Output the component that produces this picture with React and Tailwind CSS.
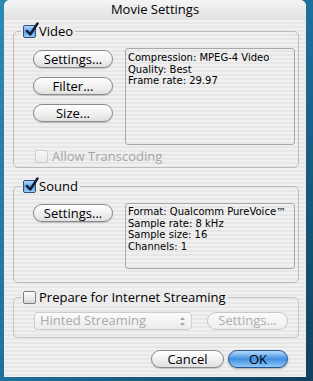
import React from "react";

const stripes =
  "bg-[image:repeating-linear-gradient(180deg,#f0f0f0_0px,#f0f0f0_2px,#e7e7e7_2px,#e7e7e7_4px)]";

function Check({ checked, disabled }) {
  let box = "border-[#7d7d7d] bg-gradient-to-b from-[#ffffff] to-[#d9d9d9]";
  if (disabled) box = "border-[#cfcfcf] bg-gradient-to-b from-[#f7f7f7] to-[#e9e9e9]";
  if (checked) box = "border-[#2d4f80] bg-gradient-to-b from-[#b4d8f8] via-[#5a9fe3] to-[#9cccf5]";

  return (
    <span className={`relative inline-block h-[13px] w-[13px] shrink-0 rounded-[2px] border ${box}`}>
      {checked && (
        <svg
          className="absolute -top-[4px] left-[1px]"
          width="14"
          height="15"
          viewBox="0 0 14 15"
        >
          <path
            d="M2 9 L5.2 12.5 L12.5 1.5"
            stroke="#0e1c36"
            strokeWidth="2.4"
            fill="none"
            strokeLinecap="round"
            strokeLinejoin="round"
          />
        </svg>
      )}
    </span>
  );
}

function Legend({ label, checked }) {
  return (
    <div className="absolute -top-[8px] left-[7px] flex items-center gap-[3px] bg-[#ececec] px-[2px] text-[13px] leading-[15px] text-black">
      <Check checked={checked} />
      <span>{label}</span>
    </div>
  );
}

function AquaButton({ children, className = "" }) {
  return (
    <div
      className={`flex h-[18px] items-center justify-center rounded-full border border-[#8a8a8a] bg-gradient-to-b from-[#ffffff] via-[#f1f1f1] to-[#e0e0e0] text-[13px] leading-none text-black shadow-[0_1px_1px_rgba(0,0,0,0.18)] ${className}`}
    >
      {children}
    </div>
  );
}

const info =
  "rounded-[3px] border border-[#a9a9a9] pl-[2px] font-['DejaVu_Sans',sans-serif] text-[10px] leading-[11.7px] text-black";

export default function App() {
  return (
    <div className="h-[381px] w-[313px] bg-gradient-to-br from-[#2c89b0] via-[#20719a] to-[#123f5c] pl-[4px] font-['Open_Sans',sans-serif]">
      <div className={`flex h-[377px] w-[302px] flex-col rounded-t-[6px] ${stripes}`}>
        {/* title bar */}
        <div className="flex h-[20px] items-center justify-center rounded-t-[6px] bg-gradient-to-b from-[#f4f4f4] to-[#e2e2e2] text-[13px] text-black">
          Movie Settings
        </div>

        {/* Video */}
        <div className="relative ml-[9px] mt-[11px] h-[137px] w-[286px] rounded-[5px] border border-[#bcbcbc] pl-[19px] pr-[3px] pt-[16px]">
          <Legend label="Video" checked />
          <div className="flex gap-[12px]">
            <div className="mt-[2px] flex w-[80px] flex-col gap-[9px]">
              <AquaButton>Settings...</AquaButton>
              <AquaButton>Filter...</AquaButton>
              <AquaButton>Size...</AquaButton>
            </div>
            <div className={`h-[97px] w-[170px] pt-[3px] ${info}`}>
              <div>Compression: MPEG-4 Video</div>
              <div>Quality: Best</div>
              <div>Frame rate: 29.97</div>
            </div>
          </div>
          <div className="ml-[2px] mt-[5px] flex items-center gap-[4px] text-[13px] leading-[13px] text-[#a6a6a6]">
            <Check disabled />
            <span>Allow Transcoding</span>
          </div>
        </div>

        {/* Sound */}
        <div className="relative ml-[9px] mt-[18px] h-[97px] w-[286px] rounded-[5px] border border-[#bcbcbc] pl-[19px] pr-[3px] pt-[16px]">
          <Legend label="Sound" checked />
          <div className="flex gap-[12px]">
            <div className="mt-[1px] w-[80px]">
              <AquaButton>Settings...</AquaButton>
            </div>
            <div className={`h-[66px] w-[170px] pt-[2px] ${info}`}>
              <div>Format: Qualcomm PureVoice™</div>
              <div>Sample rate: 8 kHz</div>
              <div>Sample size: 16</div>
              <div>Channels: 1</div>
            </div>
          </div>
        </div>

        {/* Streaming */}
        <div className="relative ml-[9px] mt-[14px] h-[41px] w-[286px] rounded-[5px] border border-[#c6c6c6] pl-[20px] pt-[14px]">
          <Legend label="Prepare for Internet Streaming" />
          <div className="flex items-center gap-[15px]">
            <div className="flex h-[18px] w-[158px] items-center rounded-[4px] border border-[#cdcdcd] bg-gradient-to-b from-[#fbfbfb] to-[#ececec] text-[13px] text-[#a9a9a9]">
              <span className="flex-1 pl-[5px]">Hinted Streaming</span>
              <span className="flex h-full w-[18px] items-center justify-center">
                <svg width="7" height="11" viewBox="0 0 7 11">
                  <path d="M3.5 1 L6 4 L1 4 Z" fill="#a8a8a8" />
                  <path d="M3.5 10 L6 7 L1 7 Z" fill="#a8a8a8" />
                </svg>
              </span>
            </div>
            <div className="flex h-[18px] w-[81px] items-center justify-center rounded-full border border-[#c8c8c8] bg-gradient-to-b from-[#fbfbfb] to-[#eeeeee] text-[13px] text-[#acacac]">
              Settings...
            </div>
          </div>
        </div>

        {/* bottom buttons */}
        <div className="mt-[12px] flex justify-end gap-[4px] pr-[18px]">
          <AquaButton className="w-[73px]">Cancel</AquaButton>
          <div className="flex h-[18px] w-[60px] items-center justify-center rounded-full border border-[#27548f] bg-gradient-to-b from-[#b6dcfb] via-[#3f8fe2] to-[#8fcaf7] text-[13px] leading-none text-black shadow-[0_1px_2px_rgba(0,0,0,0.3)]">
            OK
          </div>
        </div>
      </div>
    </div>
  );
}
